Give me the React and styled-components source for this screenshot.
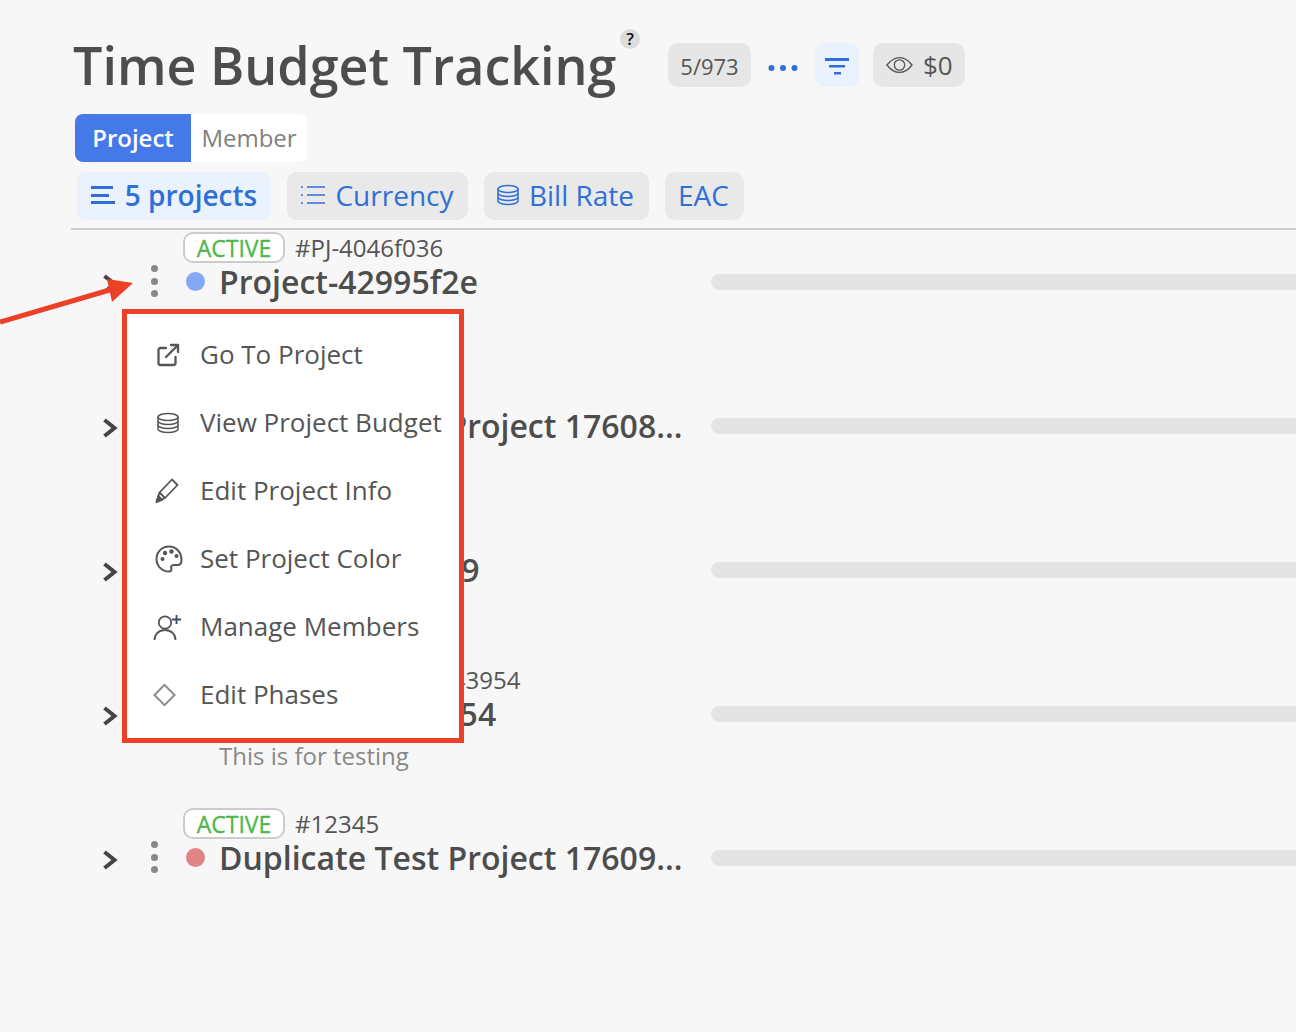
import React from 'react'
import styled, { createGlobalStyle } from 'styled-components'

const GlobalStyle = createGlobalStyle`
  html, body {
    margin: 0;
    height: 100%;
    background: #f7f7f7;
    overflow: hidden;
  }
  * { box-sizing: border-box; }
`

const projects = [
  { status: 'ACTIVE', code: '#PJ-4046f036', name: 'Project-42995f2e', color: '#84a8f3' },
  { status: 'ACTIVE', code: '#12344', name: 'Duplicate Test Project 17608...', color: '#e08488' },
  { status: 'ACTIVE', code: '#PJ-5521a009', name: 'Project-88213fb9', color: '#84a8f3' },
  { status: 'ACTIVE', code: '#PJ-d7d0d12343954', name: 'Project-7721f3954', color: '#84a8f3', note: 'This is for testing' },
  { status: 'ACTIVE', code: '#12345', name: 'Duplicate Test Project 17609...', color: '#e08488' },
]

const BarsIcon = () => (
  <svg width="24" height="20" viewBox="0 0 24 20" fill="#2f6fd8">
    <rect x="0" y="1" width="22" height="3" />
    <rect x="0" y="9" width="18" height="3" />
    <rect x="0" y="16" width="24" height="3" />
  </svg>
)

const ListIcon = () => (
  <svg width="24" height="20" viewBox="0 0 24 20" fill="none" stroke="#2f6fd8" strokeWidth="1.5">
    <path d="M6 2h18M6 10h18M6 18h18" />
    <path d="M1 1v2M1 9v2M1 17v2" />
  </svg>
)

const DbIcon = ({ color = '#2f6fd8', w = 22 }) => (
  <svg width={w} height={w} viewBox="0 0 22 22" fill="none" stroke={color} strokeWidth="1.5">
    <ellipse cx="11" cy="5" rx="10" ry="3.6" />
    <path d="M1 5v12c0 2 4.5 3.6 10 3.6s10-1.6 10-3.6V5" />
    <path d="M1 9c0 2 4.5 3.6 10 3.6S21 11 21 9" />
    <path d="M1 13c0 2 4.5 3.6 10 3.6S21 15 21 13" />
  </svg>
)

const EyeIcon = () => (
  <svg width="27" height="18" viewBox="0 0 27 18" fill="none" stroke="#555" strokeWidth="1.3">
    <path d="M1 9c3.4-4.6 7.6-7.4 12.5-7.4S22.600 4.400 26 9c-3.400 4.600-7.600 7.400-12.500 7.400S4.400 13.600 1 9z" />
    <circle cx="13.500" cy="9" r="5.200" />
  </svg>
)

const FilterIcon = () => (
  <svg width="26" height="20" viewBox="0 0 26 20" fill="#2f6fd8">
    <rect x="1" y="3" width="24" height="3" />
    <rect x="5" y="10" width="16" height="2.500" />
    <rect x="10" y="17" width="7" height="2.500" />
  </svg>
)

const MoreIcon = () => (
  <svg width="30" height="8" viewBox="0 0 30 8" fill="#2f6fd8">
    <circle cx="3.500" cy="4" r="3" />
    <circle cx="15" cy="4" r="3" />
    <circle cx="26.500" cy="4" r="3" />
  </svg>
)

const LinkOutIcon = () => (
  <svg width="24" height="24" viewBox="0 0 24 24" fill="none" stroke="#555" strokeWidth="2.300" strokeLinecap="round" strokeLinejoin="round">
    <path d="M10 5H4.500A2 2 0 0 0 2.500 7v13a2 2 0 0 0 2 2h13a2 2 0 0 0 2-2v-6" />
    <path d="M10 14 22 2M15 2h7v7" />
  </svg>
)

const PencilIcon = () => (
  <svg width="24" height="26" viewBox="0 0 24 26" fill="none" stroke="#555" strokeWidth="1.800" strokeLinejoin="round">
    <path d="M17 1.500l5.500 5.500L10 20l-5.500-5.500z" />
    <path d="M4.500 14.500 1.500 24l8.500-4" />
    <path d="M1.500 24l1.800-6 4 3.800z" fill="#555" />
  </svg>
)

const PaletteIcon = () => (
  <svg width="28" height="28" viewBox="0 0 28 28" fill="none" stroke="#555" strokeWidth="2">
    <path d="M14 1.500C7 1.500 1.500 7 1.500 14S7 26.500 14 26.500c2 0 2.800-1.300 2.300-2.800-.7-2 .2-3.700 2.400-3.700h3.800c2.800 0 4-2 4-5C26.500 7 21 1.500 14 1.500z" />
    <circle cx="7.500" cy="14" r="2" fill="#555" stroke="none" />
    <circle cx="10" cy="8" r="2.200" fill="#555" stroke="none" />
    <circle cx="16.500" cy="6.500" r="2.200" fill="#555" stroke="none" />
    <circle cx="21.500" cy="11" r="2" fill="#555" stroke="none" />
  </svg>
)

const MemberIcon = () => (
  <svg width="30" height="30" viewBox="0 0 30 30" fill="none" stroke="#555" strokeWidth="1.800">
    <circle cx="12" cy="10.500" r="6.200" />
    <path d="M1.500 28c0-6 4.500-10 10.500-10s10.500 4 10.500 10" />
    <path d="M19 7.500h9M23.500 3v9" stroke="#3d4a6b" />
  </svg>
)

const DiamondIcon = () => (
  <svg width="23" height="23" viewBox="0 0 24 24" fill="none" stroke="#888" strokeWidth="2">
    <path d="M12 1.500 22.500 12 12 22.500 1.500 12z" />
  </svg>
)

const menuItems = [
  { label: 'Go To Project', icon: <LinkOutIcon />, left: 34 },
  { label: 'View Project Budget', icon: <DbIcon color="#555" w={22} />, left: 35 },
  { label: 'Edit Project Info', icon: <PencilIcon />, left: 33 },
  { label: 'Set Project Color', icon: <PaletteIcon />, left: 33 },
  { label: 'Manage Members', icon: <MemberIcon />, left: 31 },
  { label: 'Edit Phases', icon: <DiamondIcon />, left: 31 },
]

const App = () => {
  return (
    <Page>
      <GlobalStyle />
      <Header>
        <Title>
          Time Budget Tracking
          <Help>?</Help>
        </Title>
        <CountChip>5/973</CountChip>
        <MoreButton><MoreIcon /></MoreButton>
        <FilterButton><FilterIcon /></FilterButton>
        <CostChip><EyeIcon /> $0</CostChip>
      </Header>

      <Tabs>
        <Tab $active>Project</Tab>
        <Tab>Member</Tab>
      </Tabs>

      <Filters>
        <FilterChip $active $w={194} $right={0}><BarsIcon /> 5 projects</FilterChip>
        <FilterChip $w={181} $right={0}><ListIcon /> Currency</FilterChip>
        <FilterChip $w={165} $right={2}><DbIcon /> Bill Rate</FilterChip>
        <FilterChip $w={79} $right={2}>EAC</FilterChip>
      </Filters>

      <List>
        {projects.map((p) => (
          <Row key={p.name}>
            <StatusLine>
              <Badge>{p.status}</Badge>
              <Code>{p.code}</Code>
            </StatusLine>
            <MainLine>
              <ChevronIcon width="16" height="20" viewBox="0 0 16 20">
                <path d="M2.500 2l10 8-10 8" />
              </ChevronIcon>
              <Kebab><i /><i /><i /></Kebab>
              <ColorDot $color={p.color} />
              <Name>{p.name}</Name>
              <Bar />
            </MainLine>
            {p.note && <Note>{p.note}</Note>}
          </Row>
        ))}
      </List>

      <Menu>
        {menuItems.map((item) => (
          <MenuItem key={item.label}>
            <MenuIcon $left={item.left}>{item.icon}</MenuIcon>
            {item.label}
          </MenuItem>
        ))}
      </Menu>

      <Arrow width="140" height="60" viewBox="0 0 140 60">
        <path d="M0 50 113 17" stroke="#ec4027" strokeWidth="5" fill="none" />
        <path d="M133 11 107 7l5 23z" fill="#ec4027" />
      </Arrow>
    </Page>
  )
}

const Page = styled.div`
  position: relative;
  width: 1296px;
  height: 1032px;
  padding: 30px 0 0 71px;
  overflow: hidden;
  background: #f7f7f7;
  color: #4d4d4d;
  font-family: "Open Sans", "Liberation Sans", sans-serif;
`

const Header = styled.div`
  display: flex;
  align-items: center;
  height: 70px;
`

const Title = styled.h1`
  position: relative;
  margin: 0 0 0 2px;
  width: 595px;
  font-size: 52px;
  line-height: 70px;
  font-weight: 600;
  color: #4d4d4d;
  white-space: nowrap;
`

const Help = styled.span`
  position: absolute;
  left: 547px;
  top: -1px;
  width: 20px;
  height: 20px;
  border-radius: 50%;
  background: #dcdcdc;
  color: #111;
  font-size: 17px;
  line-height: 20px;
  font-weight: 600;
  text-align: center;
`

const CountChip = styled.div`
  width: 83px;
  height: 44px;
  margin-top: -1px;
  border-radius: 10px;
  background: #e6e6e6;
  font-size: 22px;
  line-height: 46px;
  text-align: center;
  color: #555;
`

const MoreButton = styled.div`
  display: flex;
  align-items: center;
  justify-content: center;
  width: 64px;
  height: 44px;
  padding-top: 6px;
`

const FilterButton = styled.div`
  display: flex;
  align-items: center;
  justify-content: center;
  width: 44px;
  height: 44px;
  margin: -1px 14px 0 0;
  border-radius: 10px;
  background: #eaf2fd;
`

const CostChip = styled.div`
  display: flex;
  align-items: center;
  gap: 10px;
  width: 92px;
  height: 44px;
  margin-top: -1px;
  padding-left: 13px;
  border-radius: 10px;
  background: #e6e6e6;
  font-size: 26px;
  color: #555;
`

const Tabs = styled.div`
  display: flex;
  margin: 14px 0 0 4px;
`

const Tab = styled.div`
  width: 116px;
  height: 48px;
  border-radius: ${(p) => (p.$active ? '8px 0 0 8px' : '0 8px 8px 0')};
  background: ${(p) => (p.$active ? '#4679e8' : '#fff')};
  color: ${(p) => (p.$active ? '#fff' : '#808080')};
  font-size: 24px;
  line-height: 47px;
  font-weight: ${(p) => (p.$active ? 600 : 400)};
  text-align: center;
`

const Filters = styled.div`
  display: flex;
  gap: 16px;
  height: 58px;
  padding: 0 0 8px 6px;
  margin-top: 10px;
  border-bottom: 2px solid #cccccc;
`

const FilterChip = styled.div`
  display: flex;
  align-items: center;
  justify-content: center;
  gap: 10px;
  width: ${(p) => p.$w}px;
  height: 48px;
  padding: 0 ${(p) => p.$right}px 2px 0;
  border-radius: 10px;
  background: ${(p) => (p.$active ? '#eaf2fd' : '#e9e9e9')};
  color: #2f6fd8;
  font-size: 28px;
  font-weight: ${(p) => (p.$active ? 600 : 400)};
  white-space: nowrap;
`

const List = styled.div`
  display: flex;
  flex-direction: column;
`

const Row = styled.div`
  height: 144px;
  padding: 2px 0 0 31px;
`

const StatusLine = styled.div`
  display: flex;
  align-items: center;
  gap: 10px;
  height: 31px;
  margin-left: 81px;
`

const Badge = styled.div`
  width: 102px;
  height: 31px;
  border: 2px solid #cccccc;
  border-radius: 10px;
  background: #fff;
  color: #4db74a;
  font-size: 23px;
  line-height: 28px;
  font-weight: 500;
  text-align: center;
  -webkit-text-stroke: 0.3px #4db74a;
`

const Code = styled.div`
  font-size: 24px;
  color: #555;
  white-space: nowrap;
`

const MainLine = styled.div`
  display: flex;
  align-items: center;
  height: 38px;
  padding-bottom: 2px;
`

const ChevronIcon = styled.svg`
  flex: none;
  margin-top: 6px;
  fill: none;
  stroke: #444;
  stroke-width: 4;
`

const Kebab = styled.div`
  display: flex;
  flex-direction: column;
  gap: 5.5px;
  margin-left: 33px;

  i {
    display: block;
    width: 7px;
    height: 7px;
    border-radius: 50%;
    background: #888;
  }
`

const ColorDot = styled.span`
  width: 19px;
  height: 19px;
  margin-left: 28px;
  border-radius: 50%;
  background: ${(p) => p.$color};
`

const Name = styled.div`
  width: 463px;
  margin-left: 14px;
  font-size: 32px;
  font-weight: 600;
  color: #4d4d4d;
  white-space: nowrap;
`

const Bar = styled.div`
  flex: 1;
  height: 16px;
  margin: 2px 0 0 29px;
  border-radius: 8px 0 0 8px;
  background: #e4e4e4;
`

const Note = styled.div`
  margin: 7px 0 0 117px;
  font-size: 24px;
  line-height: 32px;
  color: #888;
`

const Menu = styled.div`
  position: absolute;
  left: 122px;
  top: 309px;
  width: 342px;
  height: 434px;
  padding-top: 12px;
  border: 5px solid #ec4027;
  background: #fff;
`

const MenuItem = styled.div`
  position: relative;
  height: 68px;
  padding-left: 73px;
  font-size: 26px;
  line-height: 56px;
  color: #555;
  white-space: nowrap;
`

const MenuIcon = styled.span`
  position: absolute;
  left: ${(p) => p.$left - 5}px;
  top: 29px;
  display: flex;
  transform: translateY(-50%);
`

const Arrow = styled.svg`
  position: absolute;
  left: 0;
  top: 272px;
`

export default App
